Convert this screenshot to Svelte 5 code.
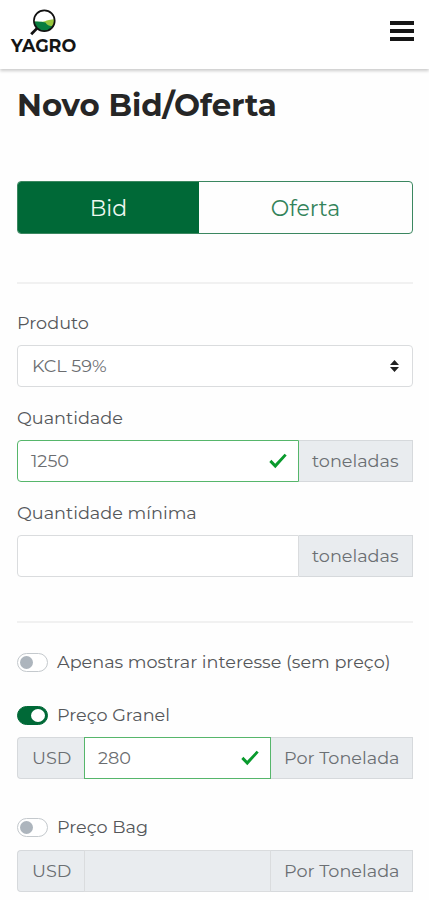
<script>
  let side = $state('bid');
  let product = $state('KCL 59%');
  let quantity = $state('1250');
  let minimum = $state('');
  let bulk = $state('280');
</script>

{#snippet check()}
  <svg class="check" viewBox="0 0 18 16" aria-hidden="true">
    <path d="M0.3 8.9 2.4 6.8 6.2 10.7 15.6.8 17.7 2.6 6.3 15.2Z" fill="#099a2d" />
  </svg>
{/snippet}

<header>
  <a class="logo" href="#home" aria-label="YAGRO">
    <svg width="28" height="28" viewBox="0 0 28 28" aria-hidden="true">
      <path d="M6.4 12.6Q13 13.6 17 12.2 20 10.8 26.8 10.3C26.6 18 22.8 22 17 22S6.6 18.5 6.4 12.6Z" fill="#98c63d" />
      <path d="M6.4 12.6Q12 12.2 17.5 13.4 19 16.8 25.2 17.2 22.5 22 17 22C10 22 6.6 18 6.4 12.6Z" fill="#087d3e" />
      <circle cx="16.3" cy="11.7" r="10.4" fill="none" stroke="#111" stroke-width="1.7" />
      <path d="M9.2 19.1 3.2 25.3" stroke="#111" stroke-width="2.8" />
    </svg>
    <span>YAGRO</span>
  </a>
  <button class="menu" aria-label="Menu"><i></i><i></i><i></i></button>
</header>

<main>
  <h1>Novo Bid/Oferta</h1>

  <div class="tabs">
    <button class="bid" class:active={side === 'bid'} onclick={() => (side = 'bid')}>Bid</button>
    <button class="offer" class:active={side === 'offer'} onclick={() => (side = 'offer')}>Oferta</button>
  </div>

  <hr />

  <div class="field">
    <div class="label">Produto</div>
    <div class="control select">
      <span>{product}</span>
      <svg width="9" height="12" viewBox="0 0 9 12" aria-hidden="true"><path d="M0 5 4.5 0 9 5ZM0 7H9L4.5 12Z" fill="#222" /></svg>
    </div>
  </div>

  <div class="field">
    <div class="label">Quantidade</div>
    <div class="group">
      <div class="control valid"><span>{quantity}</span>{@render check()}</div>
      <div class="addon tons"><span>toneladas</span></div>
    </div>
  </div>

  <div class="field">
    <div class="label">Quantidade mínima</div>
    <div class="group">
      <div class="control"><span>{minimum}</span></div>
      <div class="addon tons"><span>toneladas</span></div>
    </div>
  </div>

  <hr class="second" />

  <div class="toggle"><span class="switch"></span><span class="caption">Apenas mostrar interesse (sem preço)</span></div>

  <div class="toggle granel"><span class="switch on"></span><span class="caption">Preço Granel</span></div>
  <div class="group price">
    <div class="addon usd"><span>USD</span></div>
    <div class="control valid"><span>{bulk}</span>{@render check()}</div>
    <div class="addon per"><span>Por Tonelada</span></div>
  </div>

  <div class="toggle bag"><span class="switch"></span><span class="caption">Preço Bag</span></div>
  <div class="group price last">
    <div class="addon usd"><span>USD</span></div>
    <div class="control disabled"></div>
    <div class="addon per"><span>Por Tonelada</span></div>
  </div>
</main>

<style>
  :global(body) { background: #fefefe; }
  :global(#app) { height: 900px; overflow: hidden; font-family: Montserrat, Inter, sans-serif; font-size: 17.65px; color: #55575a; }
  * { box-sizing: border-box; }
  button { font: inherit; border: 0; padding: 0; margin: 0; background: none; }
  span { white-space: nowrap; }
  header { height: 69px; display: flex; justify-content: space-between; padding: 9px 15px 0 11px; background: #fff; box-shadow: 0 2px 3px #0003; }
  .logo { display: flex; flex-direction: column; width: 66px; text-decoration: none; color: #151515; }
  .logo svg { margin-left: 17px; flex: none; }
  .logo span { font-size: 17.5px; line-height: 18px; font-weight: 700; }
  .menu { width: 24px; height: 20px; margin-top: 12px; display: flex; flex-direction: column; justify-content: space-between; }
  .menu i { height: 4px; background: #161616; }
  main { padding: 0 16px 0 17px; }
  h1 { margin: 16px 0 0; height: 40px; line-height: 40px; font-size: 30.8px; font-weight: 700; color: #262626; white-space: nowrap; }
  .tabs { display: flex; height: 53px; margin-top: 56px; border: 1px solid #3b8760; border-radius: 4px; overflow: hidden; font-size: 22px; }
  .tabs button { color: #33835a; padding-top: 1px; }
  .bid { width: 181px; }
  .offer { flex: 1; }
  .tabs button.active { background: #006937; color: #eef8f0; }
  hr { border: 0; height: 2px; background: #f1f1f1; margin: 48px 0 28px; }
  .field { margin-bottom: 20px; }
  .label { height: 22px; line-height: 22px; margin-bottom: 11px; white-space: nowrap; }
  .group { display: flex; }
  .control { flex: 1; min-width: 0; height: 42px; border: 1px solid #dadcde; border-radius: 4px; background: #fff; display: flex; align-items: center; justify-content: space-between; padding: 0 11px 0 13px; color: #6b6d70; }
  .control span, .addon span { padding-bottom: 2px; }
  .select { padding: 0 13px 0 14px; }
  .group .control { border-radius: 4px 0 0 4px; }
  .group.price .control { border-radius: 0; }
  .control.valid { border-color: #56b66b; }
  .control.disabled { background: #e9ecef; }
  .check { width: 18px; height: 16px; flex: none; }
  .addon { height: 42px; display: flex; align-items: center; background: #e9ecef; border: 1px solid #d6d9dc; color: #6b6f73; padding-left: 13px; }
  .tons { width: 114px; border-left: 0; }
  .usd { width: 67px; border-right: 0; border-radius: 4px 0 0 4px; padding-left: 14px; }
  .per { width: 142px; border-left: 0; }
  .second { margin: 44px 0 28px; }
  .toggle { display: flex; align-items: center; height: 22px; gap: 9px; }
  .caption { padding-bottom: 2px; }
  .switch { width: 31px; height: 19px; border: 1px solid #c4c9cd; border-radius: 10px; padding: 2px; display: flex; background: #fff; }
  .switch::before { content: ''; width: 13px; height: 13px; border-radius: 50%; background: #adb5bd; }
  .switch.on { background: #006937; border-color: #006937; justify-content: flex-end; }
  .switch.on::before { background: #fff; width: 14px; }
  .granel { margin-top: 31px; }
  .price { margin-top: 11px; }
  .bag { margin-top: 37px; }
  .last { margin-top: 12px; }
</style>
